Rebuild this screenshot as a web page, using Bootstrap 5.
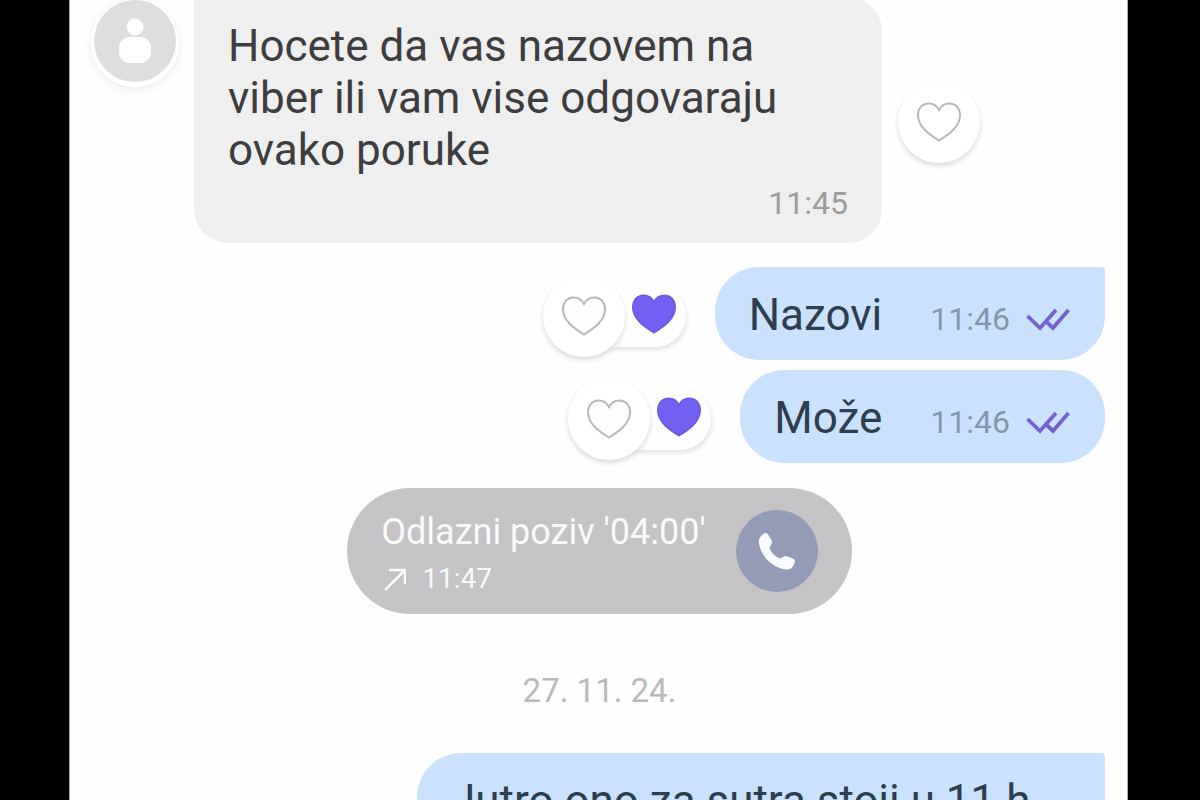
<!DOCTYPE html>
<html lang="sr-Latn">
<head>
<meta charset="utf-8">
<meta name="viewport" content="width=device-width, initial-scale=1">
<title>Poruke</title>
<link href="https://cdn.jsdelivr.net/npm/bootstrap@5.3.0/dist/css/bootstrap.min.css" rel="stylesheet">
<style>
  body { background: #000; font-family: Roboto, "Noto Sans", sans-serif; }
  .frame { height: 100vh; padding: 0 72px 0 69px; }
  .chat { background: #fefefe; padding: 0 22px 0 24px; border: 0 solid #aaa; border-width: 0 1px; }
  .bubble { font-size: 44px; line-height: 52px; padding: 22px 35px 19px 34px; border-radius: 44px; }
  .bubble p { margin: 0; }
  .stamp { font-size: 32px; line-height: 40px; }
  .incoming { background: #efefef; color: #3d3d3f; width: 688px; padding: 23px 34px 20px; margin: -3px 0 0 18px; border-radius: 0 34px 34px 34px; }
  .incoming .stamp { color: #9c9c9c; margin-top: 7px; }
  .outgoing { background: #cbe2ff; color: #2c3e50; }
  .outgoing .stamp { color: #8496ad; }
  .first { border-top-right-radius: 4px; }
  .second { margin-top: 10px; }
  .avatar, .round { width: 82px; height: 82px; border-radius: 50%; flex: none; }
  .avatar { background: #e0dde1; box-shadow: 0 2px 0 3px #fff, 0 5px 8px 3px #eeebef; }
  .round { border: 0; padding: 0; }
  .like { background: #fff; box-shadow: 0 3px 5px #d9d9d9; position: relative; }
  .reactions { margin: 4px 29px 0 0; }
  .given { width: 102px; height: 62px; margin-left: -41px; padding: 0 6px 4px 44px; background: #fefefe; border: 0; border-radius: 31px; box-shadow: 1px 3px 4px #e2e2e2; }
  .call { background: #c5c3c6; color: #fafafa; border-radius: 63px; padding: 16px 34px; margin-top: 25px; gap: 30px; }
  .call-title { font-size: 36px; line-height: 48px; }
  .call-time { font-size: 28px; line-height: 38px; }
  .dial { background: #939bb6; }
  .day { color: #b9b9b9; font-size: 33px; margin: 57px 0 42px; }
  .latest { width: 688px; }
</style>
</head>
<body>
<svg class="d-none">
  <symbol id="heart" viewBox="0 0 46 42"><path d="M23 39.500C14 34 2 26 2 14.500C2 7 6.500 2.500 12.500 2.500C17.500 2.500 21 5 23 9C25 5 28.500 2.500 33.500 2.500C39.500 2.500 44 7 44 14.500C44 26 32 34 23 39.500Z"/></symbol>
  <symbol id="ticks" viewBox="0 0 44 24"><path d="M1.500 9L14 21L30 3M19 13.500L27 21L42.500 3" fill="none" stroke="#7361d0" stroke-width="3.800"/></symbol>
</svg>
<div class="frame">
  <main class="chat h-100 overflow-hidden d-flex flex-column">
    <div class="d-flex align-items-start flex-shrink-0">
      <div class="avatar d-flex align-items-center justify-content-center" role="img" aria-label="Kontakt">
        <svg width="34" height="46" viewBox="0 0 34 46" fill="#fff"><circle cx="17" cy="9" r="8.500"/><rect x="1" y="19" width="32" height="26" rx="11"/></svg>
      </div>
      <div class="bubble incoming">
        <p>Hocete da vas nazovem na<br>viber ili vam vise odgovaraju<br>ovako poruke</p>
        <div class="stamp text-end">11:45</div>
      </div>
      <button class="round like ms-3 align-self-center" aria-label="Sviđa mi se"><svg width="46" height="42" fill="#fff" stroke="#b8b8b8" stroke-width="2"><use href="#heart"/></svg></button>
    </div>

    <div class="d-flex justify-content-end align-items-center flex-shrink-0 mt-4">
      <div class="reactions d-flex align-items-center">
        <button class="round like" aria-label="Sviđa mi se"><svg width="46" height="42" fill="#fdfdfd" stroke="#b8b8b8" stroke-width="2"><use href="#heart"/></svg></button>
        <button class="given" aria-label="Reakcija"><svg width="46" height="42" fill="#7360f2" stroke="#6d5ce0" stroke-width="2"><use href="#heart"/></svg></button>
      </div>
      <div class="bubble outgoing first d-flex align-items-center">
        <p>Nazovi</p><span class="stamp ms-5 pt-2">11:46</span><svg class="ms-3 mt-2" width="44" height="24" role="img" aria-label="Viđeno"><use href="#ticks"/></svg>
      </div>
    </div>

    <div class="second d-flex justify-content-end align-items-center flex-shrink-0">
      <div class="reactions d-flex align-items-center">
        <button class="round like" aria-label="Sviđa mi se"><svg width="46" height="42" fill="#fdfdfd" stroke="#b8b8b8" stroke-width="2"><use href="#heart"/></svg></button>
        <button class="given" aria-label="Reakcija"><svg width="46" height="42" fill="#7360f2" stroke="#6d5ce0" stroke-width="2"><use href="#heart"/></svg></button>
      </div>
      <div class="bubble outgoing d-flex align-items-center">
        <p>Može</p><span class="stamp ms-5 pt-2">11:46</span><svg class="ms-3 mt-2" width="44" height="24" role="img" aria-label="Viđeno"><use href="#ticks"/></svg>
      </div>
    </div>

    <div class="call d-flex align-items-center align-self-center flex-shrink-0">
      <div class="pt-1">
        <div class="call-title">Odlazni poziv '04:00'</div>
        <div class="call-time d-flex align-items-center mt-1"><svg class="me-3" width="25" height="24" viewBox="0 0 25 24" fill="none" stroke="#fafafa" stroke-width="2.500"><path d="M4 23L24 3M8 3H24V17"/></svg>11:47</div>
      </div>
      <button class="round dial" aria-label="Pozovi"><svg width="40" height="40" viewBox="0 0 40 40" fill="#f8fbff"><path d="M2 9C3 6 6 2.500 8.500 2C10.500 2 11 3.500 12 5L14.500 9C15.500 11 15 12.500 14 14L12.500 16.500C14 21.500 18 25.500 23.500 27.500L26 26C27.500 25 28.500 24.500 30.500 25.500L36 27.500C38 28.500 38.500 29.500 37.500 32C36 36 34 38.500 30 38.500C22 38 14 33.500 8.500 27C4.500 21.500 1 14 2 9Z"/></svg></button>
    </div>

    <div class="day stamp text-center flex-shrink-0">27. 11. 24.</div>

    <div class="bubble outgoing first latest align-self-end flex-shrink-0"><p>Jutro ono za sutra stoji u 11 h</p></div>
  </main>
</div>
<script src="https://cdn.jsdelivr.net/npm/bootstrap@5.3.0/dist/js/bootstrap.bundle.min.js"></script>
</body>
</html>
